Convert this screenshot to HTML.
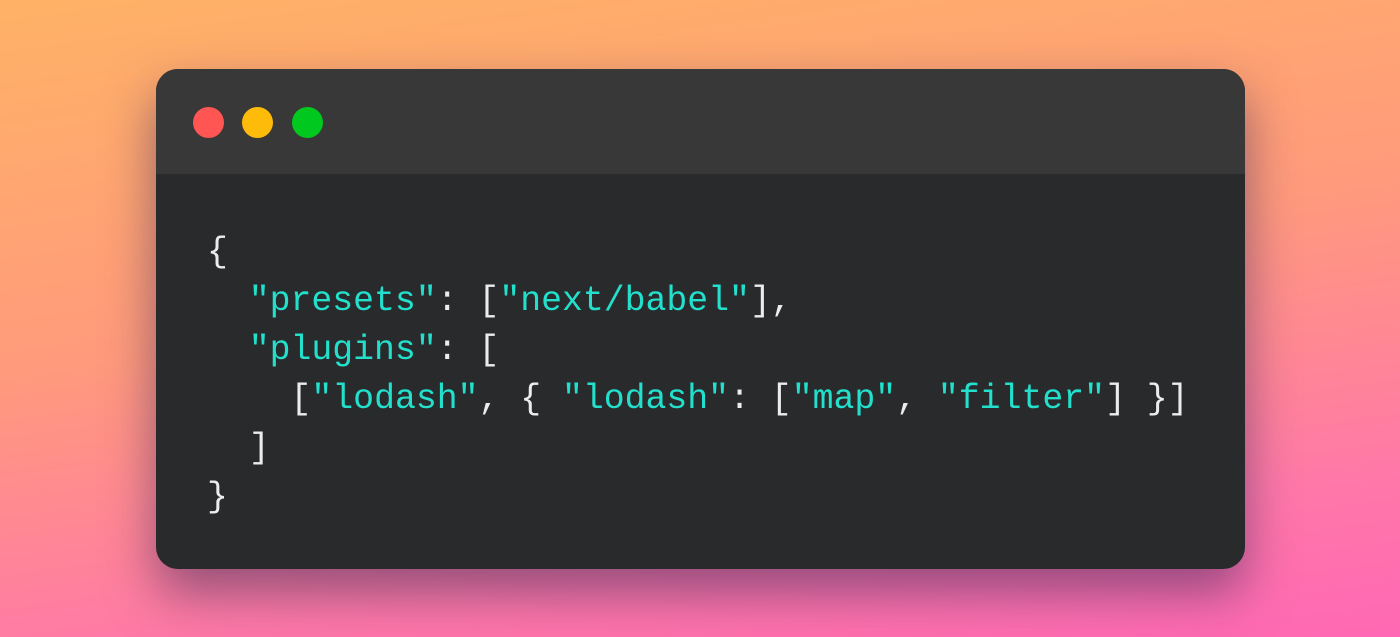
<!DOCTYPE html>
<html><head><meta charset="utf-8"><style>
html,body{margin:0;padding:0;width:1400px;height:637px;overflow:hidden}
body{background:linear-gradient(172deg,#ffb266 0%,#ff9a7c 45%,#ff78a8 80%,#ff68b4 100%);position:relative;font-family:"Liberation Mono",monospace}
.win{position:absolute;left:156px;top:69px;width:1089px;height:500px;border-radius:22px;background:#282a2c;overflow:hidden;box-shadow:0 24px 50px rgba(60,40,90,0.55)}
.bar{height:105px;background:#383838;position:relative}
.dot{position:absolute;top:38px;width:31px;height:31px;border-radius:50%}
pre{position:absolute;left:51px;top:159px;margin:0;font-family:"Liberation Mono",monospace;font-size:34.8px;line-height:49px;color:#ececec}
.s{color:#22e0cc}
</style></head><body>
<div class="win">
<div class="bar">
<div class="dot" style="left:37px;background:#ff5553"></div>
<div class="dot" style="left:86px;background:#ffbb0a"></div>
<div class="dot" style="left:136px;background:#00c81f"></div>
</div>
<pre>{
  <span class="s">"presets"</span>: [<span class="s">"next/babel"</span>],
  <span class="s">"plugins"</span>: [
    [<span class="s">"lodash"</span>, { <span class="s">"lodash"</span>: [<span class="s">"map"</span>, <span class="s">"filter"</span>] }]
  ]
}</pre>
</div>
</body></html>
